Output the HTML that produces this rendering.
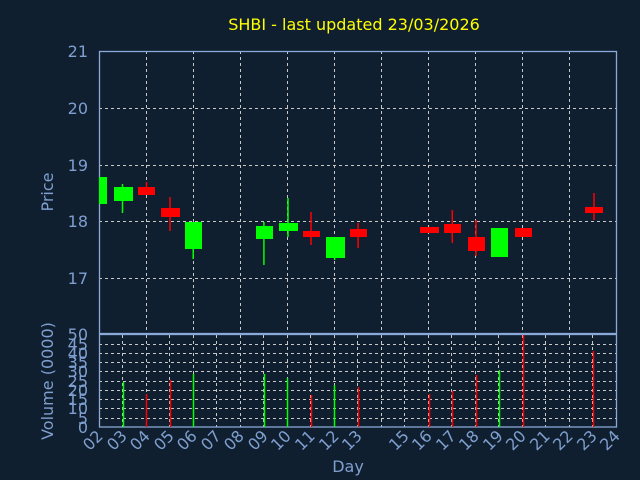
<!DOCTYPE html>
<html><head><style>
html,body{margin:0;padding:0;background:#0f1f30;}
svg{display:block}
text{font-family:"DejaVu Sans","Liberation Sans",sans-serif;fill:#7f9fcf}
</style></head><body>
<svg width="640" height="480" viewBox="0 0 640 480" xmlns="http://www.w3.org/2000/svg">
<rect width="640" height="480" fill="#0f1f30"/>
<text x="354" y="30" text-anchor="middle" font-size="16" style="fill:#ffff00">SHBI - last updated 23/03/2026</text>
<g stroke="#c8c8c8" stroke-dasharray="3,3" stroke-width="1">
<path d="M99 108.5H617M99 165.5H617M99 221.5H617M99 278.5H617"/>
<path d="M146.5 51V334M193.5 51V334M240.5 51V334M287.5 51V334M334.5 51V334M381.5 51V334M428.5 51V334M475.5 51V334M522.5 51V334M569.5 51V334"/>
<path d="M99 344.5H617M99 353.5H617M99 362.5H617M99 371.5H617M99 381.5H617M99 390.5H617M99 399.5H617M99 408.5H617M99 418.5H617"/>
<path d="M122.5 335V427M146.5 335V427M169.5 335V427M193.5 335V427M216.5 335V427M240.5 335V427M263.5 335V427M287.5 335V427M310.5 335V427M334.5 335V427M357.5 335V427M381.5 335V427M404.5 335V427M428.5 335V427M451.5 335V427M475.5 335V427M498.5 335V427M522.5 335V427M545.5 335V427M569.5 335V427M592.5 335V427"/>
</g>
<g stroke="#8aa8d8" stroke-width="1.3" fill="none">
<rect x="99.5" y="51.5" width="517" height="282"/>
<rect x="99.5" y="334.5" width="517" height="92.5"/>
</g>
<g stroke-width="1.5">
<g fill="#00ff00" stroke="#00ff00">
<line x1="103" y1="177" x2="103" y2="204"/><rect x="99" y="177" width="8" height="27" stroke="none"/>
<line x1="122.5" y1="184" x2="122.5" y2="213"/><rect x="114" y="187" width="19" height="14" stroke="none"/>
<line x1="193.2" y1="222" x2="193.2" y2="259"/><rect x="185" y="222" width="17" height="27" stroke="none"/>
<line x1="263.9" y1="222" x2="263.9" y2="265"/><rect x="256" y="226" width="17" height="13" stroke="none"/>
<line x1="288" y1="198" x2="288" y2="237"/><rect x="279" y="223" width="19" height="8" stroke="none"/>
<line x1="334.6" y1="237" x2="334.6" y2="260"/><rect x="326" y="237" width="19" height="21" stroke="none"/>
<line x1="499.5" y1="228" x2="499.5" y2="257"/><rect x="491" y="228" width="17" height="29" stroke="none"/>
</g>
<g fill="#ff0000" stroke="#ff0000">
<line x1="146.5" y1="182" x2="146.5" y2="195"/><rect x="138" y="187" width="17" height="8" stroke="none"/>
<line x1="170" y1="197" x2="170" y2="231"/><rect x="161" y="208" width="19" height="9" stroke="none"/>
<line x1="311" y1="212" x2="311" y2="245"/><rect x="303" y="231" width="17" height="6" stroke="none"/>
<line x1="358.1" y1="223" x2="358.1" y2="248"/><rect x="350" y="229" width="17" height="8" stroke="none"/>
<rect x="420" y="227" width="19" height="6" stroke="none"/>
<line x1="452.3" y1="210" x2="452.3" y2="243"/><rect x="444" y="224" width="17" height="9" stroke="none"/>
<line x1="476" y1="220" x2="476" y2="256"/><rect x="468" y="237" width="17" height="14" stroke="none"/>
<rect x="515" y="228" width="17" height="9" stroke="none"/>
<line x1="594" y1="193" x2="594" y2="220"/><rect x="585" y="207" width="18" height="6" stroke="none"/>
</g>
</g>
<g stroke-width="1.5">
<g stroke="#00ff00">
<path d="M123.5 382V427M193.5 374V427M264.5 374V427M287.5 378V427M334.5 385V427M499.5 370V427"/>
</g>
<g stroke="#ff0000">
<path d="M146.5 394V427M170.5 380V427M311.5 395V427M358.5 387V427M429.5 394V427M452.5 391V427M476.5 375V427M523.5 335V427M593.5 351V427"/>
</g>
</g>
<g font-size="16" text-anchor="end">
<text x="88" y="57">21</text><text x="88" y="114">20</text><text x="88" y="171">19</text><text x="88" y="227">18</text><text x="88" y="284">17</text>
<text x="88" y="340">50</text><text x="88" y="350">45</text><text x="88" y="359">40</text><text x="88" y="368">35</text><text x="88" y="377">30</text><text x="88" y="387">25</text><text x="88" y="396">20</text><text x="88" y="405">15</text><text x="88" y="414">10</text><text x="88" y="424">5</text><text x="88" y="433">0</text>
</g>
<text transform="translate(53,192) rotate(-90)" font-size="16" text-anchor="middle">Price</text>
<text transform="translate(53,381) rotate(-90)" font-size="16" text-anchor="middle">Volume (0000)</text>
<g font-size="16" text-anchor="end">
<text transform="translate(104,437) rotate(-45)">02</text>
<text transform="translate(128,437) rotate(-45)">03</text>
<text transform="translate(151,437) rotate(-45)">04</text>
<text transform="translate(175,437) rotate(-45)">05</text>
<text transform="translate(198,437) rotate(-45)">06</text>
<text transform="translate(222,437) rotate(-45)">07</text>
<text transform="translate(245,437) rotate(-45)">08</text>
<text transform="translate(269,437) rotate(-45)">09</text>
<text transform="translate(292,437) rotate(-45)">10</text>
<text transform="translate(316,437) rotate(-45)">11</text>
<text transform="translate(340,437) rotate(-45)">12</text>
<text transform="translate(363,437) rotate(-45)">13</text>
<text transform="translate(410,437) rotate(-45)">15</text>
<text transform="translate(433,437) rotate(-45)">16</text>
<text transform="translate(457,437) rotate(-45)">17</text>
<text transform="translate(480,437) rotate(-45)">18</text>
<text transform="translate(504,437) rotate(-45)">19</text>
<text transform="translate(527,437) rotate(-45)">20</text>
<text transform="translate(551,437) rotate(-45)">21</text>
<text transform="translate(574,437) rotate(-45)">22</text>
<text transform="translate(598,437) rotate(-45)">23</text>
<text transform="translate(621,437) rotate(-45)">24</text>
</g>
<text x="348" y="472" font-size="16" text-anchor="middle">Day</text>
</svg>
</body></html>
